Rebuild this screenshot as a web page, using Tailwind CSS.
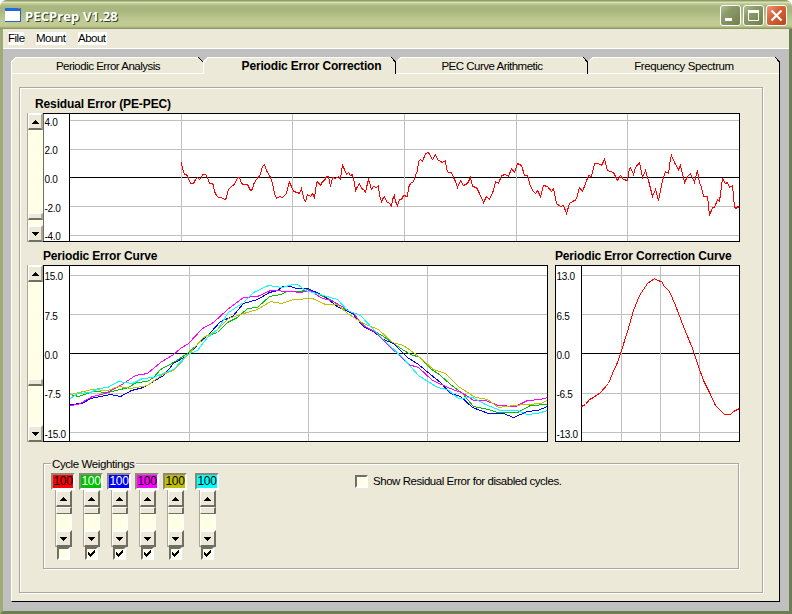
<!DOCTYPE html>
<html lang="en">
<head>
    <meta charset="UTF-8">
    <meta name="viewport" content="width=device-width, initial-scale=1.0">
    <title>PECPrep V1.28</title>
    <script src="https://cdn.jsdelivr.net/npm/@tailwindcss/browser@4"></script>
    <style>
        body {
            font-family: 'Liberation Sans', Arial, sans-serif;
        }
    </style>
</head>
<body class="w-[792px] h-[614px] overflow-hidden bg-white text-black text-[11.5px] leading-[13px] tracking-[-0.5px]">
    <div class="w-[792px] h-[614px] flex flex-col rounded-t-[7px] overflow-hidden bg-[#c0c0c0]">

        <!-- Title bar -->
        <header class="h-[29px] shrink-0 flex items-start pl-[5px] pr-[5px] border-b border-[#8a9a62] bg-[linear-gradient(#8c9b67_0px,#8c9b67_1px,#e4ecc0_2px,#c9d39c_3px,#a9b67f_6px,#a9b67f_11px,#b4c188_16px,#c2cc94_22px,#c0ca92_26px,#9caa70_28px)]">
            <svg class="mt-2 shrink-0" width="16" height="14" shape-rendering="crispEdges">
                <rect width="16" height="14" fill="#2a63c8"/>
                <rect x="0" y="0" width="16" height="2" fill="#1a6fe8"/>
                <rect x="13" y="0" width="2" height="1" fill="#e06030"/>
                <rect x="0" y="3" width="15" height="10" fill="#fff"/>
            </svg>
            <h1 class="grow ml-1 mt-[7px] font-['Open_Sans'] font-bold text-[13px] leading-[18px] tracking-[0.1px] text-white [text-shadow:1px_1px_0_#3c4424]">PECPrep V1.28</h1>
            <div class="flex gap-[2px] mt-[5px]">
                <svg width="21" height="21">
                    <defs>
                        <linearGradient id="green" x1="0" y1="0" x2="1" y2="1">
                            <stop offset="0" stop-color="#b4c096"/><stop offset=".35" stop-color="#8b9a68"/><stop offset="1" stop-color="#6f7f4c"/>
                        </linearGradient>
                        <linearGradient id="red" x1="0" y1="0" x2="1" y2="1">
                            <stop offset="0" stop-color="#eb9c7c"/><stop offset=".4" stop-color="#d8643c"/><stop offset="1" stop-color="#b84418"/>
                        </linearGradient>
                    </defs>
                    <rect x=".5" y=".5" width="20" height="20" rx="2.5" fill="url(#green)" stroke="#fff"/>
                    <rect x="5" y="13" width="7" height="3" fill="#fff"/>
                </svg>
                <svg width="21" height="21">
                    <rect x=".5" y=".5" width="20" height="20" rx="2.5" fill="url(#green)" stroke="#fff"/>
                    <path d="M5.5 15.5V6.5H15.5V15.5Z" fill="none" stroke="#fff"/>
                    <path d="M5 6.5H16" stroke="#fff" stroke-width="3"/>
                </svg>
                <svg width="21" height="21">
                    <rect x=".5" y=".5" width="20" height="20" rx="2.5" fill="url(#red)" stroke="#fff"/>
                    <path d="M5.5 5.5L15.5 15.5M15.5 5.5L5.5 15.5" stroke="#fff" stroke-width="2.2"/>
                </svg>
            </div>
        </header>

        <div class="grow flex flex-col border-l-3 border-[#9eab76] border-r-3 border-b-3 border-r-[#6c7f50] border-b-[#6c7f50]">
            <!-- Menu bar -->
            <nav class="h-5 shrink-0 flex items-start gap-3 pl-[5px] pt-[3px] bg-[#ece9d8] border-b border-white">
                <span class="w-4 bg-white">File</span>
                <span class="w-[30px] bg-white">Mount</span>
                <span class="w-[29px] bg-white">About</span>
            </nav>

            <main class="ml-2 mt-2 w-[769px] h-[545px] flex flex-col">
                <!-- Tabs -->
                <div class="h-[17px] shrink-0 flex">
                    <div class="grid w-48 place-items-center">
                        <svg class="col-start-1 row-start-1" width="192" height="17" shape-rendering="crispEdges">
                            <path d="M0 17V5L5 0H187L192 5V17Z" fill="#ece9d8"/>
                            <path d="M.5 17V5L5 .5H187M0 16.5H192" fill="none" stroke="#fff"/>
                            <path d="M187.5 .5L192 5" stroke="#000"/>
                        </svg>
                        <span class="col-start-1 row-start-1 pl-[2px] pt-px">Periodic Error Analysis</span>
                    </div>
                    <div class="grid w-[193px] place-items-center text-[12px] font-bold tracking-[-0.17px]">
                        <svg class="col-start-1 row-start-1" width="193" height="17" shape-rendering="crispEdges">
                            <path d="M0 17V5L5 0H188L193 5V17Z" fill="#ece9d8"/>
                            <path d="M.5 17V5L5 .5H188" fill="none" stroke="#fff"/>
                            <path d="M188.5 .5L192.5 5V17" fill="none" stroke="#000"/>
                        </svg>
                        <span class="col-start-1 row-start-1 pl-[24px] pt-px">Periodic Error Correction</span>
                    </div>
                    <div class="grid w-48 place-items-center">
                        <svg class="col-start-1 row-start-1" width="192" height="17" shape-rendering="crispEdges">
                            <path d="M0 17V5L5 0H187L192 5V17Z" fill="#ece9d8"/>
                            <path d="M0 5L5 .5H187M0 16.5H191" fill="none" stroke="#fff"/>
                            <path d="M187.5 .5L191.5 5V17" fill="none" stroke="#000"/>
                        </svg>
                        <span class="col-start-1 row-start-1 pt-px">PEC Curve Arithmetic</span>
                    </div>
                    <div class="grid w-48 place-items-center">
                        <svg class="col-start-1 row-start-1" width="192" height="17" shape-rendering="crispEdges">
                            <path d="M0 17V5L5 0H187L192 5V17Z" fill="#ece9d8"/>
                            <path d="M0 5L5 .5H187M0 16.5H191" fill="none" stroke="#fff"/>
                            <path d="M187.5 .5L191.5 5V17" fill="none" stroke="#000"/>
                        </svg>
                        <span class="col-start-1 row-start-1 pt-px tracking-[-0.4px]">Frequency Spectrum</span>
                    </div>
                </div>

                <!-- Tab page -->
                <section class="grow bg-[#ece9d8] border-l border-l-white border-r border-r-black border-b border-b-black pt-[13px] pl-[7px]">
                    <div class="w-[744px] h-[506px] border border-[#aca899] shadow-[1px_1px_0_#fff,inset_1px_1px_0_#fff] pl-[7px] pt-[9px]">

                        <h2 class="h-4 pl-2 pt-px text-[12px] leading-[13px] font-bold tracking-[-0.12px]">Residual Error (PE-PEC)</h2>
                        <div class="flex h-[129px]">
                            <div class="w-4 flex flex-col bg-[#ffffe8] border-l border-l-[#aca899]">
                                <div class="h-[17px] flex items-center justify-center bg-[#ece9d8] border-t-2 border-l border-white border-b-2 border-r-2 border-b-[#716f64] border-r-[#aca899]">
                                    <svg width="7" height="4" shape-rendering="crispEdges"><path d="M3 0h1v1h1v1h1v1h1v1H0V3h1V2h1V1h1z"/></svg>
                                </div>
                                <div class="h-[83px]"></div>
                                <div class="h-[7px] bg-[#ece9d8] border-t border-l border-white border-b-2 border-r-2 border-b-[#716f64] border-r-[#aca899]"></div>
                                <div class="h-[5px]"></div>
                                <div class="h-[17px] flex items-center justify-center bg-[#ece9d8] border-t-2 border-l border-white border-b-2 border-r-2 border-b-[#716f64] border-r-[#aca899]">
                                    <svg width="7" height="4" shape-rendering="crispEdges"><path d="M3 4h1V3h1V2h1V1h1V0H0v1h1v1h1v1h1z"/></svg>
                                </div>
                            </div>
                            <svg width="697" height="129" viewBox="43 113 697 129" shape-rendering="crispEdges">
                                <rect x="43" y="113" width="697" height="129" fill="#fff"/>
                                <path d="M70 120.5H739M70 149.5H739M70 206.5H739M70 235.5H739" stroke="#c0c0c0"/>
                                <path d="M70 177.5H739" stroke="#000"/>
                                <path d="M181.5 114V241M292.5 114V241M404.5 114V241M516.5 114V241M627.5 114V241" stroke="#c0c0c0"/>
                                <path d="M43 113.5H740M43 241.5H740M739.5 113V242M69.5 113V242" stroke="#000"/>
                                <path d="M43.5 114V241" stroke="#716f64"/>
                                <g font-size="10" letter-spacing="-.3">
                                    <text x="44.5" y="126">4.0</text>
                                    <text x="44.5" y="154">2.0</text>
                                    <text x="44.5" y="183">0.0</text>
                                    <text x="44.5" y="212">-2.0</text>
                                    <text x="44.5" y="240">-4.0</text>
                                </g>
                                <polyline transform="translate(.5 .5)" fill="none" stroke="#f00" points="181,162 182,168 184,174 186,174 188,178 190,183 193,183 195,179 197,177 199,179 201,177 202,174 205,174 207,177 209,183 212,183 213,185 214,191 216,195 218,197 221,197 224,199 226,198 227,191 229,188 232,185 234,184 237,177 239,177 241,183 243,184 247,184 250,190 252,189 253,184 256,179 260,174 262,166 264,164 266,170 270,177 272,183 274,193 276,198 279,196 282,197 286,193 288,184 289,182 291,186 293,191 297,192 299,193 301,188 302,193 304,200 305,201 307,194 310,196 312,193 314,197 316,183 317,181 320,185 322,181 324,180 326,176 328,176 330,186 332,177 335,178 338,176 340,179 341,171 342,165 344,169 346,174 348,172 350,175 352,174 354,182 355,190 357,186 359,183 361,188 363,189 365,192 366,187 368,179 369,182 371,189 373,186 376,187 378,185 379,195 381,201 383,197 384,196 386,201 389,203 391,206 392,199 394,195 395,201 397,205 399,199 401,199 403,195 407,196 408,187 410,183 413,181 415,175 417,170 418,161 420,159 422,161 425,153 428,152 432,159 435,154 437,159 440,161 442,162 445,160 446,169 448,172 451,172 453,177 455,181 457,187 460,180 463,185 467,183 470,177 472,186 476,187 479,193 483,202 486,196 489,199 493,190 495,181 498,183 501,175 505,174 508,176 511,168 514,172 517,163 521,165 524,175 527,175 530,186 533,191 535,193 537,190 540,196 543,185 547,186 551,191 553,188 556,203 560,206 563,205 566,213 569,203 572,201 576,199 579,187 582,191 585,183 588,175 591,176 594,163 598,163 601,165 604,159 607,170 613,172 617,180 620,175 623,179 627,180 629,168 630,167 633,174 635,167 639,162 642,177 645,170 648,180 652,196 655,189 658,200 662,180 665,171 668,173 670,158 671,155 674,162 678,169 680,165 684,182 687,176 690,173 694,182 697,170 699,182 701,187 703,196 707,196 709,215 712,207 714,207 717,199 719,201 722,178 725,183 727,182 729,187 732,185 734,207 736,208 737,206 739,207"/>
                            </svg>
                        </div>

                        <div class="flex h-[23px] pt-2 pl-4 text-[12px] leading-[13px] font-bold tracking-[-0.16px]">
                            <h2 class="w-[512px]">Periodic Error Curve</h2>
                            <h2>Periodic Error Correction Curve</h2>
                        </div>
                        <div class="flex h-[177px]">
                            <div class="w-4 flex flex-col bg-[#ffffe8] border-l border-l-[#aca899]">
                                <div class="h-[17px] flex items-center justify-center bg-[#ece9d8] border-t-2 border-l border-white border-b-2 border-r-2 border-b-[#716f64] border-r-[#aca899]">
                                    <svg width="7" height="4" shape-rendering="crispEdges"><path d="M3 0h1v1h1v1h1v1h1v1H0V3h1V2h1V1h1z"/></svg>
                                </div>
                                <div class="h-[97px]"></div>
                                <div class="h-[7px] bg-[#ece9d8] border-t border-l border-white border-b-2 border-r-2 border-b-[#716f64] border-r-[#aca899]"></div>
                                <div class="h-[39px]"></div>
                                <div class="h-[17px] flex items-center justify-center bg-[#ece9d8] border-t-2 border-l border-white border-b-2 border-r-2 border-b-[#716f64] border-r-[#aca899]">
                                    <svg width="7" height="4" shape-rendering="crispEdges"><path d="M3 4h1V3h1V2h1V1h1V0H0v1h1v1h1v1h1z"/></svg>
                                </div>
                            </div>
                            <svg width="505" height="177" viewBox="43 265 505 177" shape-rendering="crispEdges">
                                <rect x="43.5" y="265.5" width="504" height="176" fill="#fff" stroke="#000"/>
                                <path d="M70 275.5H547M70 314.5H547M70 393.5H547M70 432.5H547" stroke="#c0c0c0"/>
                                <path d="M69.5 265V441M70 353.5H547" stroke="#000"/>
                                <path d="M189.5 266V441M308.5 266V441M427.5 266V441" stroke="#c0c0c0"/>
                                <g font-size="10" letter-spacing="-.3">
                                    <text x="44.5" y="280">15.0</text>
                                    <text x="44.5" y="320">7.5</text>
                                    <text x="44.5" y="359">0.0</text>
                                    <text x="44.5" y="398">-7.5</text>
                                    <text x="44.5" y="438">-15.0</text>
                                </g>
                                <g transform="translate(.5 .5)" fill="none">
                                    <polyline stroke="#00c000" points="70,394 78,396 93,391 107,392 120,389 128,387 136,382 147,381 153,377 160,369 173,362 187,353 197,344 207,335 217,332 227,322 237,317 247,308 257,307 269,296 280,294 287,291 300,291 308,289 317,293 327,298 333,301 340,307 352,312 358,320 367,328 373,330 383,336 393,343 402,349 410,354 420,357 430,368 440,375 450,384 462,393 473,406 488,409 497,412 517,412 530,405 547,404"/>
                                    <polyline stroke="#0000ff" points="70,404 82,403 90,398 110,394 120,396 131,390 143,387 153,381 163,375 173,363 187,355 200,341 210,332 220,321 232,316 243,303 257,299 269,292 277,290 282,286 290,286 296,288 307,288 323,295 338,307 352,313 363,326 373,331 383,339 393,343 407,357 418,364 430,374 440,382 450,393 460,396 472,407 488,413 503,413 513,417 527,411 537,410 547,406"/>
                                    <polyline stroke="#ff00ff" points="70,405 78,404 92,396 105,393 120,385 135,375 147,373 160,362 173,354 180,348 188,343 202,328 213,322 227,309 243,297 257,296 270,290 290,291 300,292 310,290 320,297 333,301 343,307 353,313 363,325 375,332 387,344 398,354 408,364 418,367 432,380 450,388 463,393 473,400 485,400 498,405 515,406 527,400 540,399 547,397"/>
                                    <polyline stroke="#c0c000" points="70,394 92,389 107,390 118,386 130,388 147,385 162,374 173,370 187,355 203,337 215,331 228,318 240,314 257,309 270,301 281,303 293,299 312,298 325,304 337,304 347,313 363,323 378,329 392,342 403,345 417,355 433,369 445,373 458,386 475,397 487,399 498,407 513,405 540,403 547,400"/>
                                    <polyline stroke="#00ffff" points="70,398 77,393 90,392 98,388 107,387 118,381 132,383 142,378 153,377 165,372 173,369 187,354 197,350 207,337 217,329 228,312 243,302 253,292 268,285 282,287 292,284 297,284 305,290 323,295 337,299 347,310 360,315 373,329 387,343 403,358 418,375 437,387 447,389 458,398 472,397 485,404 500,410 517,410 527,414 537,413 547,410"/>
                                </g>
                            </svg>
                            <svg class="ml-[7px]" width="185" height="177" viewBox="555 265 185 177" shape-rendering="crispEdges">
                                <rect x="555.5" y="265.5" width="184" height="176" fill="#fff" stroke="#000"/>
                                <path d="M582 275.5H739M582 314.5H739M582 393.5H739M582 432.5H739" stroke="#c0c0c0"/>
                                <path d="M581.5 265V441M582 353.5H739" stroke="#000"/>
                                <path d="M621.5 266V441M660.5 266V441M699.5 266V441" stroke="#c0c0c0"/>
                                <g font-size="10" letter-spacing="-.3">
                                    <text x="556.5" y="280">13.0</text>
                                    <text x="556.5" y="320">6.5</text>
                                    <text x="556.5" y="359">0.0</text>
                                    <text x="556.5" y="398">-6.5</text>
                                    <text x="556.5" y="438">-13.0</text>
                                </g>
                                <polyline transform="translate(.5 .5)" fill="none" stroke="#f00" points="581,406 585,404 589,399 593,397 600,392 608,383 612,373 617,362 621,350 627,331 633,310 639,295 647,283 654,278 657,280 661,281 664,286 669,291 675,305 683,326 692,348 698,366 703,380 710,394 715,405 724,414 730,414 733,411 739,408"/>
                            </svg>
                        </div>

                        <!-- Cycle weightings -->
                        <div class="ml-4 mt-[21px] w-[696px] h-[106px] flex border border-[#aca899] shadow-[1px_1px_0_#fff,inset_1px_1px_0_#fff]">
                            <div class="w-[304px] -mt-[7px] pl-[7px]">
                                <h3 class="w-[85px] h-4 pl-px pt-px bg-[#ece9d8] whitespace-nowrap tracking-[-0.4px]">Cycle Weightings</h3>
                                <div id="cycles" class="flex gap-1"></div>
                            </div>
                            <label class="flex items-start pt-[11px] pl-[7px] tracking-[-0.45px]">
                                <span class="w-[13px] h-[13px] bg-[#ffffe8] border-2 border-[#716f64] border-r-white border-b-white"></span>
                                <span class="pl-[5px]">Show Residual Error for disabled cycles.</span>
                            </label>
                        </div>
                    </div>
                </section>
            </main>
        </div>
    </div>

    <script>
        const cycles = [
            { bg: 'bg-[#ff0000]', text: 'text-black', on: false },
            { bg: 'bg-[#00c000]', text: 'text-white', on: true },
            { bg: 'bg-[#0000ff]', text: 'text-white', on: true },
            { bg: 'bg-[#ff00ff]', text: 'text-black', on: true },
            { bg: 'bg-[#c0c000]', text: 'text-black', on: true },
            { bg: 'bg-[#00ffff]', text: 'text-black', on: true, gap: 'ml-1' },
        ];
        const button = 'flex items-center justify-center bg-[#ece9d8] border-t-2 border-l border-white border-b-2 border-r-2 border-b-[#716f64] border-r-[#716f64]';
        const tick = '<svg width="9" height="9" viewBox="0 0 9 9" shape-rendering="crispEdges"><path d="M1 3h1v1h1v1h1V4h1V3h1V2h1V1h1v3H7v1H6v1H5v1H4v1H3V7H2V6H1z"/></svg>';

        document.getElementById('cycles').innerHTML = cycles.map(c => `
            <div class="w-6 flex flex-col items-center ${c.gap || ''}">
                <div class="w-6 h-[17px] flex items-center justify-center border-2 border-[#8c897c] border-r-white border-b-white text-[12px] tracking-[-0.4px] ${c.bg} ${c.text}">100</div>
                <div class="w-[17px] h-[57px] flex flex-col bg-[#ffffe8] border-l border-l-[#aca899]">
                    <div class="h-[17px] ${button}">
                        <svg width="7" height="4" shape-rendering="crispEdges"><path d="M3 0h1v1h1v1h1v1h1v1H0V3h1V2h1V1h1z"/></svg>
                    </div>
                    <div class="h-[7px] bg-[#ece9d8] border-t border-l border-white border-b border-r-2 border-b-[#716f64] border-r-[#716f64]"></div>
                    <div class="h-4 border-r border-white"></div>
                    <div class="h-[17px] ${button}">
                        <svg width="7" height="4" shape-rendering="crispEdges"><path d="M3 4h1V3h1V2h1V1h1V0H0v1h1v1h1v1h1z"/></svg>
                    </div>
                </div>
                <div class="w-[13px] h-[13px] flex items-center justify-center bg-[#ffffe8] border-2 border-[#716f64] border-r-white border-b-white">${c.on ? tick : ''}</div>
            </div>
        `).join('');
    </script>
</body>
</html>
